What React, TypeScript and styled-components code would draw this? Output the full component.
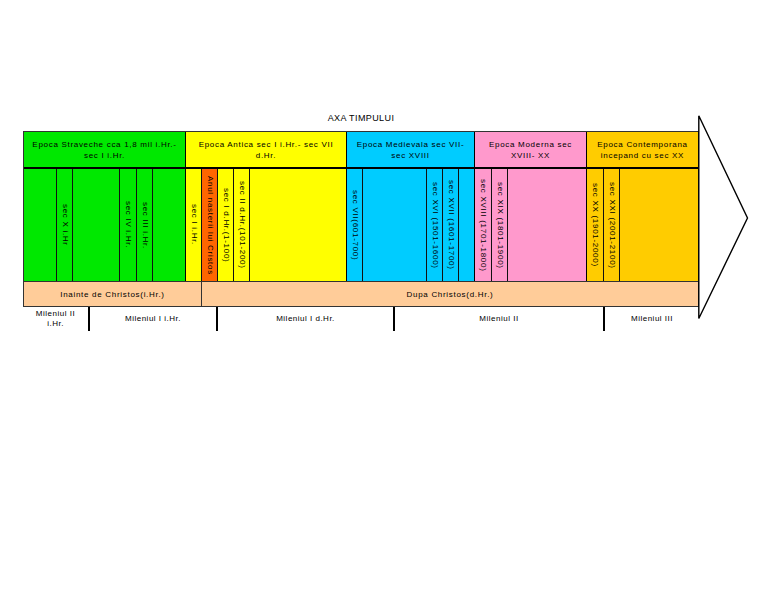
import React from 'react';
import styled, { createGlobalStyle } from 'styled-components';

// AXA TIMPULUI - timeline table with arrow head

const GlobalStyle = createGlobalStyle`
  body {
    margin: 0;
    background: #ffffff;
    font-family: "Liberation Sans", Arial, sans-serif;
    color: #000;
  }
`;

type CellData = { w: number; t?: string; bg?: string };
type EraData = { w: number; bg: string; title: string[]; cells: CellData[] };

const eras: EraData[] = [
  {
    w: 162,
    bg: '#00e800',
    title: ['Epoca Straveche cca 1,8 mil i.Hr.-', 'sec I i.Hr.'],
    cells: [{ w: 33 }, { w: 16, t: 'sec X i.Hr' }, { w: 47 }, { w: 17, t: 'sec IV i.Hr.' }, { w: 16, t: 'sec III i.Hr.' }, { w: 32 }],
  },
  {
    w: 161,
    bg: '#ffff00',
    title: ['Epoca Antica sec I i.Hr.- sec VII', 'd.Hr.'],
    cells: [
      { w: 16, t: 'sec I i.Hr.' },
      { w: 16, t: 'Anul nasterii lui Cristos', bg: '#ff6600' },
      { w: 16, t: 'sec I d.Hr.(1-100)' },
      { w: 16, t: 'sec II d.Hr.(101-200)' },
      { w: 96 },
    ],
  },
  {
    w: 128,
    bg: '#00ccff',
    title: ['Epoca Medievala sec VII-', 'sec XVIII'],
    cells: [{ w: 16, t: 'sec VII(601-700)' }, { w: 64 }, { w: 16, t: 'sec XVI (1501-1600)' }, { w: 16, t: 'sec XVII (1601-1700)' }, { w: 15 }],
  },
  {
    w: 112,
    bg: '#ff99cc',
    title: ['Epoca Moderna sec', 'XVIII- XX'],
    cells: [{ w: 17, t: 'sec XVIII (1701-1800)' }, { w: 16, t: 'sec XIX (1801-1900)' }, { w: 78 }],
  },
  {
    w: 111,
    bg: '#ffcc00',
    title: ['Epoca Contemporana', 'incepand cu sec XX'],
    cells: [{ w: 17, t: 'sec XX (1901-2000)' }, { w: 16, t: 'sec XXI (2001-2100)' }, { w: 78 }],
  },
];

const milenii = [
  { w: 67, t: ['Mileniul II', 'i.Hr.'] },
  { w: 128, t: ['Mileniul I i.Hr.'] },
  { w: 177, t: ['Mileniul I d.Hr.'] },
  { w: 210, t: ['Mileniul II'] },
  { w: 94, t: ['Mileniul III'] },
];

const Page = styled.div`
  padding: 112px 0 0 23px;
`;

const Title = styled.div`
  width: 676px;
  text-align: center;
  font-size: 9px;
  line-height: 13px;
  letter-spacing: 0.4px;
  margin-bottom: 6px;
`;

const Diagram = styled.div`
  display: flex;
  align-items: flex-start;
`;

const Table = styled.div`
  width: 676px;
  display: flex;
  flex-direction: column;
`;

const EraRow = styled.div`
  display: flex;
  border: 1px solid #333;
  border-bottom: none;
`;

const Era = styled.div<{ $w: number; $bg: string; $last: boolean }>`
  display: flex;
  flex-direction: column;
  box-sizing: border-box;
  width: ${(p) => (p.$last ? 'auto' : `${p.$w}px`)};
  flex: ${(p) => (p.$last ? '1' : 'none')};
  background: ${(p) => p.$bg};
  border-right: ${(p) => (p.$last ? 'none' : '1px solid #000')};
`;

const EraHeader = styled.div`
  height: 35px;
  border-bottom: 2px solid #000;
  display: flex;
  flex-direction: column;
  align-items: center;
  justify-content: center;
  font-size: 8px;
  line-height: 11px;
  letter-spacing: 0.7px;
  text-align: center;
  white-space: nowrap;
`;

const EraBody = styled.div`
  height: 112px;
  display: flex;
`;

const Cell = styled.div<{ $w: number; $bg?: string; $last: boolean }>`
  box-sizing: border-box;
  width: ${(p) => (p.$last ? 'auto' : `${p.$w}px`)};
  flex: ${(p) => (p.$last ? '1' : 'none')};
  background: ${(p) => p.$bg || 'transparent'};
  border-right: ${(p) => (p.$last ? 'none' : '1px solid #111')};
  display: flex;
  align-items: center;
  justify-content: center;
  overflow: hidden;
`;

const VerticalText = styled.span`
  writing-mode: vertical-rl;
  font-size: 8px;
  line-height: 1;
  letter-spacing: 0.7px;
  white-space: nowrap;
`;

const PeachRow = styled.div`
  display: flex;
  height: 26px;
  box-sizing: border-box;
  background: #ffcc99;
  border: 1px solid #333;
`;

const PeachCell = styled.div<{ $w?: number }>`
  box-sizing: border-box;
  width: ${(p) => (p.$w ? `${p.$w}px` : 'auto')};
  flex: ${(p) => (p.$w ? 'none' : '1')};
  border-right: ${(p) => (p.$w ? '1px solid #333' : 'none')};
  display: flex;
  align-items: center;
  justify-content: center;
  font-size: 8px;
  letter-spacing: 0.7px;
`;

const MileniuRow = styled.div`
  display: flex;
  height: 24px;
`;

const MileniuCell = styled.div<{ $w: number; $last: boolean }>`
  box-sizing: border-box;
  width: ${(p) => p.$w}px;
  border-right: ${(p) => (p.$last ? 'none' : '2px solid #000')};
  display: flex;
  flex-direction: column;
  align-items: center;
  justify-content: center;
  font-size: 8px;
  line-height: 10px;
  letter-spacing: 0.5px;
  text-align: center;
`;

const Arrow = styled.svg`
  flex: none;
  margin-left: -1px;
  margin-top: -16px;
`;

const App = () => {
  return (
    <>
      <GlobalStyle />
      <Page>
        <Title>AXA TIMPULUI</Title>
        <Diagram>
          <Table>
            <EraRow>
              {eras.map((era, i) => (
                <Era key={i} $w={era.w} $bg={era.bg} $last={i === eras.length - 1}>
                  <EraHeader>
                    {era.title.map((line, j) => (
                      <div key={j}>{line}</div>
                    ))}
                  </EraHeader>
                  <EraBody>
                    {era.cells.map((c, j) => (
                      <Cell key={j} $w={c.w} $bg={c.bg} $last={j === era.cells.length - 1}>
                        {c.t && <VerticalText>{c.t}</VerticalText>}
                      </Cell>
                    ))}
                  </EraBody>
                </Era>
              ))}
            </EraRow>
            <PeachRow>
              <PeachCell $w={178}>Inainte de Christos(i.Hr.)</PeachCell>
              <PeachCell>Dupa Christos(d.Hr.)</PeachCell>
            </PeachRow>
            <MileniuRow>
              {milenii.map((m, i) => (
                <MileniuCell key={i} $w={m.w} $last={i === milenii.length - 1}>
                  {m.t.map((line, j) => (
                    <div key={j}>{line}</div>
                  ))}
                </MileniuCell>
              ))}
            </MileniuRow>
          </Table>
          <Arrow width="52" height="205" viewBox="0 0 52 205">
            <polyline points="0.8,0.8 49.5,103 0.8,203.5 0.8,0.8" fill="none" stroke="#000" strokeWidth="1.4" strokeLinejoin="miter" />
          </Arrow>
        </Diagram>
      </Page>
    </>
  );
};

export default App;
